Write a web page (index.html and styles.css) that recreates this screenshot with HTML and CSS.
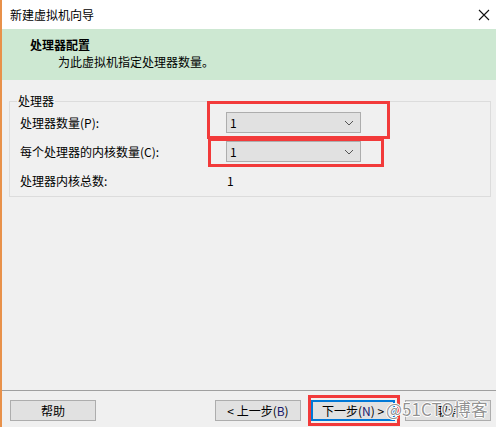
FILE: index.html
```html
<!DOCTYPE html>
<html lang="zh-CN">
<head>
    <meta charset="UTF-8">
    <title>新建虚拟机向导</title>
    <link rel="stylesheet" href="styles.css">
</head>
<body>
    <div class="window">
        <div class="titlebar">
            <span class="title">新建虚拟机向导</span>
            <svg class="close" width="12" height="12" viewBox="0 0 12 12">
                <path d="M1 1 L11 11 M11 1 L1 11" stroke="#111" stroke-width="1.1" fill="none"/>
            </svg>
        </div>

        <div class="banner">
            <div class="banner-title">处理器配置</div>
            <div class="banner-sub">为此虚拟机指定处理器数量。</div>
        </div>

        <div class="content">
            <fieldset class="group">
                <legend>处理器</legend>
                <div class="row">
                    <span class="label">处理器数量(P):</span>
                    <div class="combo">
                        <span>1</span>
                        <svg width="10" height="6" viewBox="0 0 10 6"><polyline points="1,1 5,5 9,1" fill="none" stroke="#555" stroke-width="1"/></svg>
                    </div>
                </div>
                <div class="row">
                    <span class="label">每个处理器的内核数量(C):</span>
                    <div class="combo">
                        <span>1</span>
                        <svg width="10" height="6" viewBox="0 0 10 6"><polyline points="1,1 5,5 9,1" fill="none" stroke="#555" stroke-width="1"/></svg>
                    </div>
                </div>
                <div class="row total">
                    <span class="label">处理器内核总数:</span>
                    <span class="value">1</span>
                </div>
            </fieldset>
        </div>

        <div class="footer">
            <button class="btn">帮助</button>
            <div class="nav">
                <button class="btn">&lt; 上一步(<span class="key">B</span>)</button>
                <button class="btn primary">下一步(<span class="key">N</span>) &gt;</button>
                <button class="btn">取消</button>
            </div>
        </div>

        <div class="mark mark-1"></div>
        <div class="mark mark-2"></div>
        <div class="mark mark-3"></div>
        <div class="watermark">@51CTO博客</div>
    </div>
</body>
</html>
```

FILE: styles.css
```css
* {
    box-sizing: border-box;
}

body {
    margin: 0;
    background: #f0f0f0;
    font-family: "Noto Sans CJK SC", "Microsoft YaHei", sans-serif;
    font-size: 12px;
    color: #000;
}

.window {
    position: relative;
    width: 496px;
    height: 427px;
    border-left: 2px solid #e8914a;
    border-left-color: #e8914a;
    display: flex;
    flex-direction: column;
    overflow: hidden;
}

.titlebar {
    height: 29px;
    flex: none;
    background: #fff;
    display: flex;
    align-items: center;
    justify-content: space-between;
    padding: 0 6px 1px 8px;
}

.close {
    margin-top: 1px;
}

.banner {
    height: 51px;
    flex: none;
    background: #cde8d2;
    padding: 7px 0 0 28px;
}

.banner-title {
    font-weight: bold;
    line-height: 17px;
}

.banner-sub {
    padding-left: 28px;
    line-height: 17px;
}

.content {
    flex: 1;
    padding: 14px 5px 0 7px;
}

.group {
    margin: 0;
    border: 1px solid #dcdcdc;
    padding: 0 10px;
    height: 103px;
}

.group legend {
    padding: 0 1px;
    margin-left: -3px;
    line-height: 14px;
}

.row {
    display: flex;
    align-items: center;
    height: 29px;
}

.row.total {
    height: 28px;
}

.label {
    width: 206px;
}

.combo {
    width: 135px;
    height: 21px;
    background: #e1e1e1;
    border: 1px solid #adadad;
    display: flex;
    align-items: center;
    justify-content: space-between;
    padding: 0 6px 0 3px;
}

.combo svg {
    margin-top: 1px;
}

.value {
    padding-left: 1px;
}

.footer {
    height: 37px;
    flex: none;
    border-top: 1px solid #a0a0a0;
    display: flex;
    justify-content: space-between;
    align-items: flex-start;
    padding: 9px 5px 0 8px;
}

.nav {
    display: flex;
    gap: 10px;
}

.btn {
    height: 21px;
    width: 86px;
    padding: 0;
    font-family: inherit;
    font-size: 12px;
    background: #e1e1e1;
    border: 1px solid #adadad;
    color: #000;
    line-height: 17px;
}

.btn.primary {
    width: 84px;
    border: 2px solid #0078d7;
}

.key {
    color: #1a1a6e;
}

.mark {
    position: absolute;
    border: 3px solid #f23a3a;
}

.mark-1 {
    left: 205px;
    top: 101px;
    width: 183px;
    height: 38px;
}

.mark-2 {
    left: 206px;
    top: 138px;
    width: 176px;
    height: 29px;
}

.mark-3 {
    left: 306px;
    top: 395px;
    width: 92px;
    height: 31px;
}

.watermark {
    position: absolute;
    left: 384px;
    top: 396px;
    font-size: 17px;
    color: rgba(110, 110, 110, 0.75);
    text-shadow: 0 0 1px #fff, 1px 0 0 #fff, -1px 0 0 #fff, 0 1px 0 #fff, 0 -1px 0 #fff;
    white-space: nowrap;
}
```
